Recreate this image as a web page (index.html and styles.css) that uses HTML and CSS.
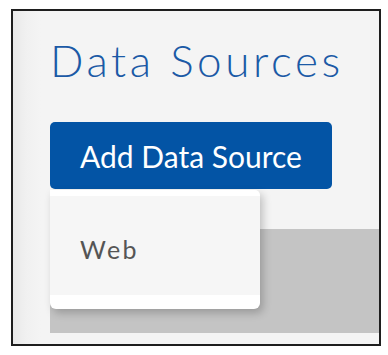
FILE: index.html
```html
<!DOCTYPE html>
<html>
<head>
<meta charset="utf-8">
<link rel="stylesheet" href="styles.css">
</head>
<body>
<div class="frame">
  <h1 class="title">Data Sources</h1>
  <div class="actions">
    <button class="add-btn">Add Data Source</button>
    <div class="menu">
      <div class="menu-item">Web</div>
    </div>
  </div>
  <div class="panel"></div>
</div>
</body>
</html>
```
FILE: styles.css
```css
html, body {
  margin: 0;
  padding: 0;
  background: #ffffff;
}
.frame {
  margin: 9px 0 0 11px;
  height: 333px;
  border: 2px solid #1e1e1e;
  background: linear-gradient(to right, #e9e9e9 0px, #f1f1f1 14px, #f4f4f4 28px, #f4f4f4 100%);
  padding-left: 37px;
  box-sizing: content-box;
  width: 329px;
  display: flex;
  flex-direction: column;
  font-family: "Lato", "DejaVu Sans", sans-serif;
}
.title {
  margin: 23px 0 0 0;
  font-weight: 300;
  font-size: 44px;
  line-height: 52px;
  color: #1b5aa6;
  letter-spacing: 3.6px;
  white-space: nowrap;
}
.actions {
  position: relative;
  margin-top: 36px;
  align-self: flex-start;
}
.add-btn {
  display: block;
  width: 282px;
  height: 67px;
  border: none;
  border-radius: 5px;
  background: #0354a5;
  color: #ffffff;
  font-family: "Lato", "DejaVu Sans", sans-serif;
  font-size: 30px;
  font-weight: 400;
  padding: 0;
}
.menu {
  position: absolute;
  top: 68px;
  left: 0;
  width: 210px;
  height: 119px;
  background: #ffffff;
  border-radius: 0 5px 6px 6px;
  box-shadow: 3px 4px 8px rgba(0, 0, 0, 0.22);
  z-index: 2;
  padding-top: 6px;
  padding-bottom: 14px;
  box-sizing: border-box;
}
.menu-item {
  height: 100%;
  background: #f6f6f6;
  padding-left: 30px;
  padding-top: 6px;
  box-sizing: border-box;
  display: flex;
  align-items: center;
  font-size: 25px;
  letter-spacing: 2.4px;
  color: #555555;
}
.panel {
  margin-top: 40px;
  height: 104px;
  background: #c4c4c4;
}
```
